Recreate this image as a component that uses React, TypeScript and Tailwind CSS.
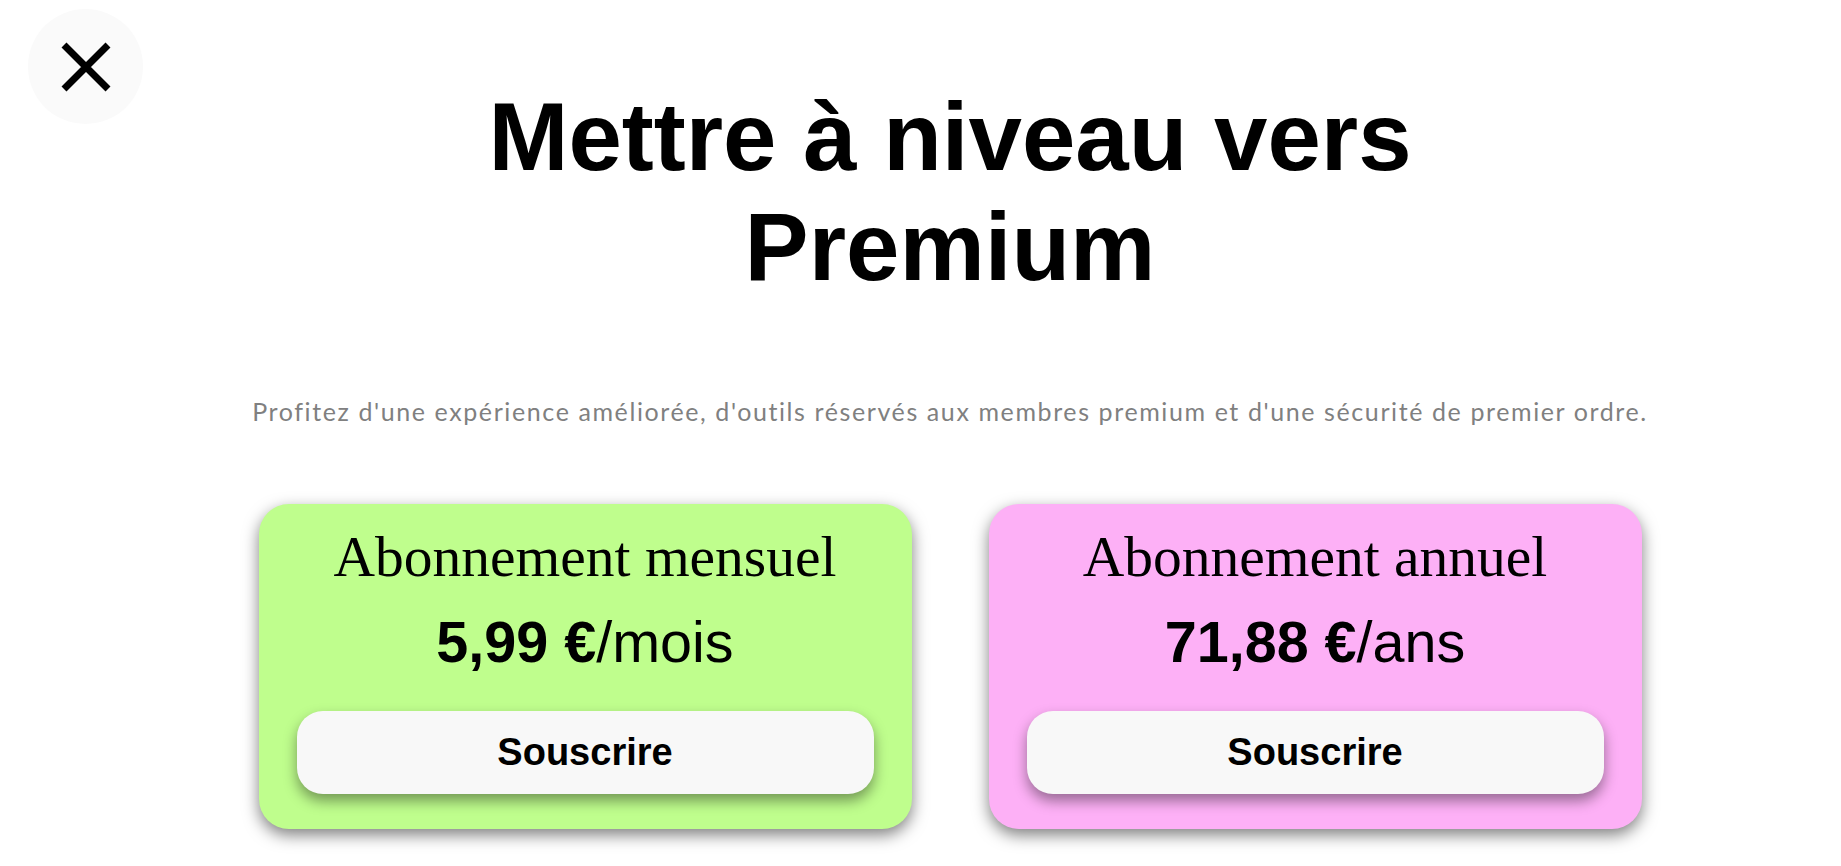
import React from 'react'

function CloseIcon() {
  return (
    <svg width="50" height="50" viewBox="0 0 50 50" fill="none">
      <path d="M3 3 L47 47 M47 3 L3 47" stroke="#000" strokeWidth="7" />
    </svg>
  )
}

interface PlanProps {
  title: string
  price: string
  period: string
  bg: string
}

function PlanCard({ title, price, period, bg }: PlanProps) {
  return (
    <div
      className={`w-[653px] h-[325px] rounded-[30px] pt-[20px] px-[38px] pb-[35px] flex flex-col items-center shadow-[0_6px_16px_rgba(0,0,0,0.5)] ${bg}`}
    >
      <h2 className="text-[57.5px] leading-[normal] text-black font-['Liberation_Serif',serif]">{title}</h2>
      <p className="mt-[20px] text-[57.5px] leading-[normal] text-black font-['Liberation_Sans',Arial,sans-serif]">
        <span className="font-bold">{price}</span>/{period}
      </p>
      <button className="mt-auto w-full h-[83px] rounded-[26px] bg-[#f8f8f8] shadow-[0_7px_14px_rgba(0,0,0,0.4)] text-[38px] font-bold text-black font-['Liberation_Sans',Arial,sans-serif]">
        Souscrire
      </button>
    </div>
  )
}

export default function App() {
  return (
    <div className="relative min-h-screen bg-white">
      <button className="absolute left-[28px] top-[9px] w-[115px] h-[115px] rounded-full bg-[#fafafa] flex items-center justify-center">
        <CloseIcon />
      </button>

      <div className="pl-[59px] pt-[82px] flex flex-col items-center">
        <h1 className="max-w-[1000px] text-center text-[96px] leading-[normal] font-bold text-black font-['Liberation_Sans',Arial,sans-serif]">
          Mettre à niveau vers Premium
        </h1>

        <p className="mt-[94px] text-[25px] leading-[normal] text-[#808080] font-['Lato',sans-serif] tracking-[1.6px]">
          Profitez d'une expérience améliorée, d'outils réservés aux membres premium et d'une sécurité de premier ordre.
        </p>

        <div className="mt-[78px] flex gap-[77px]">
          <PlanCard title="Abonnement mensuel" price="5,99 €" period="mois" bg="bg-[#bffe8d]" />
          <PlanCard title="Abonnement annuel" price="71,88 €" period="ans" bg="bg-[#fdb0f6]" />
        </div>
      </div>
    </div>
  )
}
